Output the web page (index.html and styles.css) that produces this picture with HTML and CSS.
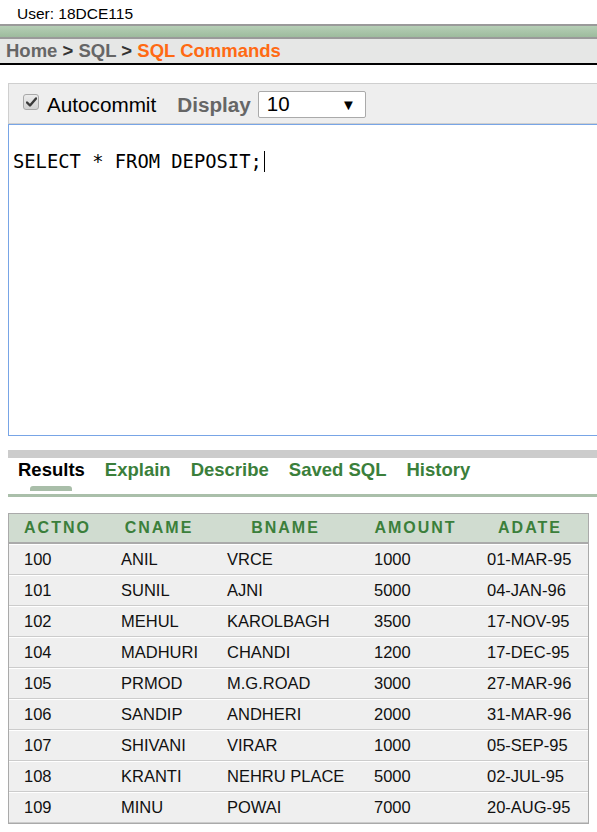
FILE: index.html
```html
<!DOCTYPE html>
<html>
<head>
<meta charset="utf-8">
<link rel="stylesheet" href="styles.css">
</head>
<body>
<div class="user">User: 18DCE115</div>
<div class="topbar"></div>
<div class="crumbs"><span class="crumb">Home</span><span class="sep"> &gt; </span><span class="crumb">SQL</span><span class="sep"> &gt; </span><span class="current">SQL Commands</span></div>

<div class="toolbar">
  <span class="check"><svg width="11" height="10" viewBox="0 0 11 10"><path d="M1 5.5 L4 8.5 L10 1.5" fill="none" stroke="#3a3a3a" stroke-width="2.4" stroke-linecap="round" stroke-linejoin="round"/></svg></span>
  <span class="auto">Autocommit</span>
  <span class="display">Display</span>
  <span class="select"><span class="val">10</span><span class="arrow">&#9660;</span></span>
</div>
<div class="editor"><span class="code">SELECT * FROM DEPOSIT;</span><span class="caret"></span></div>

<div class="tabbar"></div>
<div class="tabs">
  <span class="tab active">Results</span>
  <span class="tab">Explain</span>
  <span class="tab">Describe</span>
  <span class="tab">Saved SQL</span>
  <span class="tab">History</span>
</div>
<div class="thumbrow"><span class="thumb"></span></div>
<div class="tabline"></div>

<table class="results">
  <colgroup><col class="c1"><col class="c2"><col class="c3"><col class="c4"><col class="c5"></colgroup>
  <thead>
    <tr><th>ACTNO</th><th>CNAME</th><th>BNAME</th><th>AMOUNT</th><th>ADATE</th></tr>
  </thead>
  <tbody>
    <tr><td>100</td><td>ANIL</td><td>VRCE</td><td>1000</td><td>01-MAR-95</td></tr>
    <tr><td>101</td><td>SUNIL</td><td>AJNI</td><td>5000</td><td>04-JAN-96</td></tr>
    <tr><td>102</td><td>MEHUL</td><td>KAROLBAGH</td><td>3500</td><td>17-NOV-95</td></tr>
    <tr><td>104</td><td>MADHURI</td><td>CHANDI</td><td>1200</td><td>17-DEC-95</td></tr>
    <tr><td>105</td><td>PRMOD</td><td>M.G.ROAD</td><td>3000</td><td>27-MAR-96</td></tr>
    <tr><td>106</td><td>SANDIP</td><td>ANDHERI</td><td>2000</td><td>31-MAR-96</td></tr>
    <tr><td>107</td><td>SHIVANI</td><td>VIRAR</td><td>1000</td><td>05-SEP-95</td></tr>
    <tr><td>108</td><td>KRANTI</td><td>NEHRU PLACE</td><td>5000</td><td>02-JUL-95</td></tr>
    <tr><td>109</td><td>MINU</td><td>POWAI</td><td>7000</td><td>20-AUG-95</td></tr>
  </tbody>
</table>
</body>
</html>
```
FILE: styles.css
```css
html, body {
  margin: 0;
  padding: 0;
  background: #fff;
  overflow: hidden;
}
body {
  font-family: "Liberation Sans", Arial, sans-serif;
  color: #000;
  width: 597px;
  height: 832px;
}
.user {
  height: 20px;
  padding: 4px 0 0 17px;
  font-size: 15.5px;
  line-height: 20px;
}
.topbar {
  height: 11px;
  border-top: 2px solid #9a9a9a;
  border-bottom: 2px solid #9a9a9a;
  background: linear-gradient(#b6cfb6, #9dbb9d);
}
.crumbs {
  height: 24px;
  line-height: 24px;
  padding-left: 6px;
  background: #e6e7e6;
  border-bottom: 2px solid #000;
  font-size: 18.5px;
  font-weight: bold;
}
.crumb { color: #666; }
.sep { color: #333; }
.current { color: #ff6a13; }

.toolbar {
  margin: 18px 0 0 8px;
  height: 39px;
  background: #eeeeee;
  border-top: 1px solid #cfcfcf;
  border-left: 1px solid #cfcfcf;
  border-bottom: 1px solid #cfcfcf;
  display: flex;
  align-items: center;
  padding-left: 14px;
}
.check {
  width: 14px;
  height: 14px;
  border: 1px solid #a8a8a8;
  border-radius: 3px;
  background: linear-gradient(#ececec, #d2d2d2);
  display: flex;
  align-items: center;
  justify-content: center;
  margin-top: -4px;
}
.auto {
  font-size: 20.7px;
  margin-left: 8px;
  margin-top: 3px;
}
.display {
  font-size: 20.7px;
  font-weight: bold;
  color: #666;
  margin-left: 21px;
  margin-top: 2px;
}
.select {
  margin-left: 7px;
  background: #fff;
  border: 1px solid #aaaaaa;
  border-radius: 2px;
  display: flex;
  align-items: center;
  justify-content: space-between;
  padding: 0 9px 0 8px;
  box-sizing: border-box;
  width: 108px;
  height: 27px;
  margin-top: 1px;
}
.val { font-size: 20.5px; }
.arrow { font-size: 15px; }

.editor {
  margin-left: 8px;
  border: 1px solid #78a5e6;
  border-right: none;
  background: #fff;
  padding: 26px 0 0 4px;
  box-sizing: border-box;
  height: 312px;
  display: flex;
  align-items: flex-start;
}
.code {
  font-family: "DejaVu Sans Mono", "Liberation Mono", monospace;
  font-size: 18.8px;
  line-height: 22px;
}
.caret {
  width: 1px;
  height: 21px;
  background: #000;
  margin-left: 2px;
}

.tabbar {
  margin: 14px 0 0 8px;
  height: 8px;
  background: #cccccc;
}
.tabs {
  padding: 1px 0 0 18px;
  box-sizing: border-box;
  height: 23px;
  display: flex;
  gap: 20px;
  font-size: 18.5px;
  font-weight: bold;
  line-height: 22px;
}
.tab { color: #3b7f3b; }
.tab.active { color: #000; }
.thumbrow {
  padding: 5px 0 0 30px;
  box-sizing: border-box;
  height: 12px;
}
.thumb {
  display: block;
  width: 42px;
  height: 5px;
  background: #a9bea9;
  border-radius: 3px 3px 0 0;
}
.tabline {
  margin: 1px 0 0 8px;
  height: 3px;
  background: #aabfaa;
}

.results {
  margin: 16px 0 0 8px;
  border: 1px solid #aaaaaa;
  border-collapse: separate;
  border-spacing: 0;
  table-layout: fixed;
  width: 581px;
  font-size: 16.5px;
}
.c1 { width: 97px; }
.c2 { width: 106px; }
.c3 { width: 147px; }
.c4 { width: 113px; }
.c5 { width: 116px; }
.results th {
  height: 28px;
  padding: 0;
  background: #d0dcd0;
  color: #3b7f3b;
  font-weight: bold;
  font-size: 16px;
  letter-spacing: 2px;
  text-align: center;
  border-bottom: 2px solid #aaaaaa;
}
.results td {
  height: 28px;
  padding: 0 0 1px 15px;
  box-sizing: content-box;
  line-height: 19px;
  background: #efefef;
  border-top: 1px solid #fff;
  border-bottom: 1px solid #cccccc;
  white-space: nowrap;
  color: #111;
}
```
